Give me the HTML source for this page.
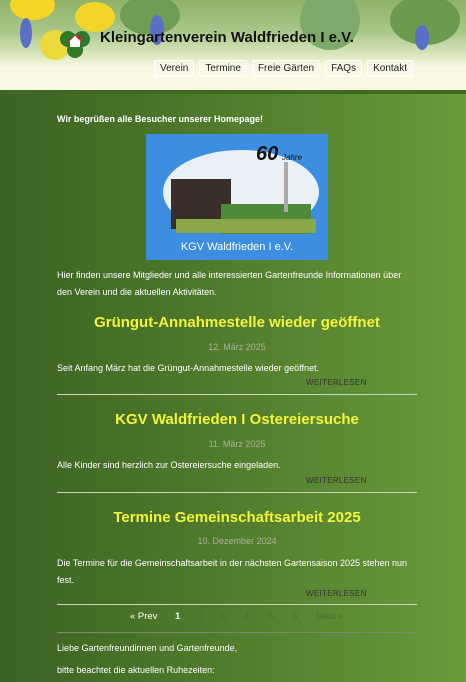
<!DOCTYPE html>
<html><head><meta charset="utf-8"><style>
*{margin:0;padding:0;box-sizing:border-box}
body{width:466px;height:682px;overflow:hidden;font-family:"Liberation Sans",sans-serif;background:linear-gradient(90deg,#3b6222 0%,#4f7a2c 45%,#6a9a3a 100%);color:#fff}
.hdr{position:absolute;left:0;top:0;width:466px;height:90px;background:linear-gradient(180deg,#8fb26a 0%,#a9c788 35%,#d8e6bc 60%,#f8f7e2 75%,#faf8e4 100%);overflow:hidden}
.hdr .f{position:absolute;border-radius:50%}
.bar{position:absolute;left:0;top:90px;width:466px;height:4px;background:#3d6a1f}
.title{position:absolute;left:100px;top:29px;font-size:15px;font-weight:bold;color:#111}
.logo{position:absolute;left:59px;top:28px;width:32px;height:30px}
.nav{position:absolute;top:60px;display:flex;gap:5px;left:154px}
.nav span{font-size:10px;color:#222;padding:2px 5px;border:1px solid #fff;background:rgba(255,255,250,.3);border-radius:2px}
.c{position:absolute;left:57px;width:360px;font-size:9px;line-height:17px}
h2{position:absolute;left:57px;width:360px;text-align:center;color:#f2f53a;font-size:15px;font-weight:bold}
.d{position:absolute;left:57px;width:360px;text-align:center;color:#a8b39a;font-size:9px}
.w{position:absolute;left:306px;font-size:8px;color:#333;letter-spacing:.3px}
.hr{position:absolute;left:57px;width:360px;height:1px;background:#c8d8b8}
.pg{position:absolute;left:0;width:466px;top:611px;font-size:9.5px;color:#4a6a35}
.pg span{position:absolute}
</style></head><body>
<div class="hdr">
<div class="f" style="left:10px;top:-10px;width:45px;height:30px;background:#f4d424"></div>
<div class="f" style="left:75px;top:2px;width:40px;height:30px;background:#f3d52a"></div>
<div class="f" style="left:40px;top:30px;width:30px;height:30px;background:#ecd93a"></div>
<div class="f" style="left:120px;top:-5px;width:60px;height:40px;background:#6f9d55"></div>
<div class="f" style="left:300px;top:-10px;width:60px;height:60px;background:#7ea96a"></div>
<div class="f" style="left:390px;top:-5px;width:70px;height:50px;background:#6b9a50"></div>
<div class="f" style="left:20px;top:18px;width:12px;height:30px;background:#5a6fc8"></div>
<div class="f" style="left:150px;top:15px;width:14px;height:30px;background:#5a6fc8"></div>
<div class="f" style="left:415px;top:25px;width:14px;height:25px;background:#5a6fc8"></div>
</div>
<svg class="logo" viewBox="0 0 32 30"><circle cx="9" cy="11" r="8" fill="#2e7a2a"/><circle cx="23" cy="11" r="8" fill="#2e7a2a"/><circle cx="16" cy="22" r="8" fill="#2e7a2a"/><path d="M9 14 L16 7 L23 14 Z" fill="#fff" stroke="#a33" stroke-width="1"/><rect x="11" y="13" width="10" height="6" fill="#fff"/><circle cx="20" cy="9" r="2" fill="#c22"/></svg>
<div class="title">Kleingartenverein Waldfrieden I e.V.</div>
<div class="nav"><span>Verein</span><span>Termine</span><span>Freie Gärten</span><span>FAQs</span><span>Kontakt</span></div>
<div class="bar"></div>
<div class="c" style="top:111px;font-weight:bold">Wir begrüßen alle Besucher unserer Homepage!</div>
<svg style="position:absolute;left:146px;top:134px" width="182" height="126" viewBox="0 0 182 126">
<rect width="182" height="126" fill="#3d8ee0"/>
<ellipse cx="95" cy="58" rx="78" ry="42" fill="#e9f0f6"/>
<rect x="25" y="45" width="60" height="50" fill="#3a2e28"/>
<rect x="75" y="70" width="90" height="30" fill="#4e8a3a"/>
<rect x="30" y="85" width="140" height="14" fill="#8aa848"/>
<rect x="138" y="28" width="4" height="50" fill="#aaa"/>
<text x="110" y="26" font-family="Liberation Sans" font-weight="bold" font-style="italic" font-size="20" fill="#111">60</text>
<text x="136" y="26" font-family="Liberation Sans" font-style="italic" font-size="8" fill="#111">Jahre</text>
<text x="91" y="116" text-anchor="middle" font-family="Liberation Sans" font-size="11" fill="#fff">KGV Waldfrieden I e.V.</text>
</svg>
<div class="c" style="top:267px">Hier finden unsere Mitglieder und alle interessierten Gartenfreunde Informationen über den Verein und die aktuellen Aktivitäten.</div>
<h2 style="top:314px">Grüngut-Annahmestelle wieder geöffnet</h2>
<div class="d" style="top:342px">12. März 2025</div>
<div class="c" style="top:360px">Seit Anfang März hat die Grüngut-Annahmestelle wieder geöffnet.</div>
<div class="w" style="top:378px">WEITERLESEN</div>
<div class="hr" style="top:394px"></div>
<h2 style="top:411px">KGV Waldfrieden I Ostereiersuche</h2>
<div class="d" style="top:439px">11. März 2025</div>
<div class="c" style="top:457px">Alle Kinder sind herzlich zur Ostereiersuche eingeladen.</div>
<div class="w" style="top:476px">WEITERLESEN</div>
<div class="hr" style="top:492px"></div>
<h2 style="top:509px">Termine Gemeinschaftsarbeit 2025</h2>
<div class="d" style="top:536px">10. Dezember 2024</div>
<div class="c" style="top:555px">Die Termine für die Gemeinschaftsarbeit in der nächsten Gartensaison 2025 stehen nun fest.</div>
<div class="w" style="top:589px">WEITERLESEN</div>
<div class="hr" style="top:604px"></div>
<div class="pg"><span style="left:130px;color:#fff">« Prev</span><span style="left:175px;color:#fff;font-weight:bold">1</span><span style="left:197px">2</span><span style="left:220px">3</span><span style="left:244px">4</span><span style="left:268px">5</span><span style="left:292px">6</span><span style="left:316px">Next »</span></div>
<div class="hr" style="top:632px;background:#7a8a70"></div>
<div class="c" style="top:640px">Liebe Gartenfreundinnen und Gartenfreunde,</div>
<div class="c" style="top:662px">bitte beachtet die aktuellen Ruhezeiten:</div>
</body></html>
